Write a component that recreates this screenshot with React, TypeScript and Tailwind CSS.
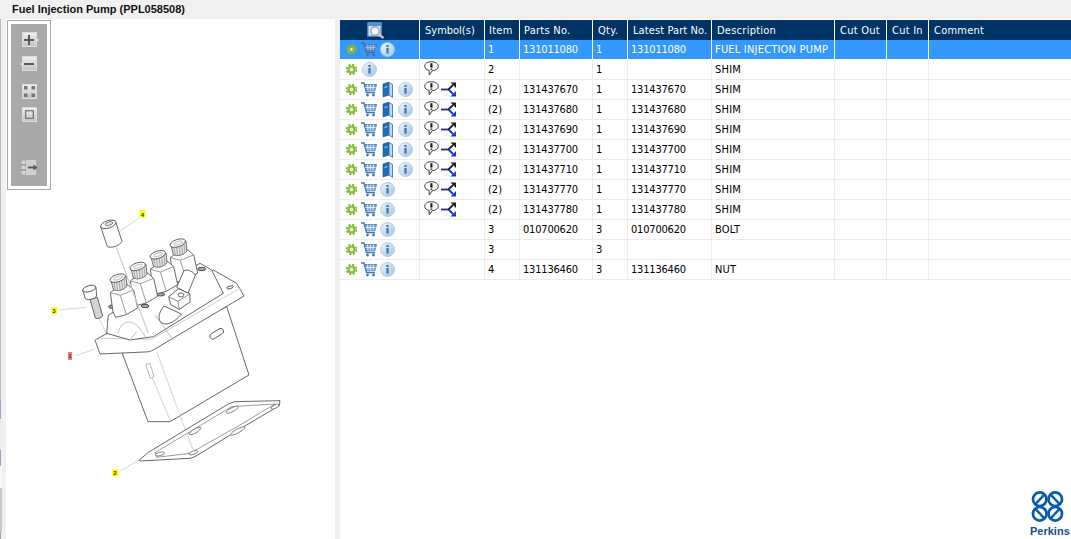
import React from 'react';

const cols = 'grid grid-cols-[80px_65px_35px_73px_35px_84px_123px_52px_42px_1fr]';

const rows = [
  { icons: 'cart-info', selected: true, sym: 0, item: '1', part: '131011080', qty: '1', latest: '131011080', desc: 'FUEL INJECTION PUMP' },
  { icons: 'info', sym: 1, item: '2', part: '', qty: '1', latest: '', desc: 'SHIM' },
  { icons: 'all', sym: 2, item: '(2)', part: '131437670', qty: '1', latest: '131437670', desc: 'SHIM' },
  { icons: 'all', sym: 2, item: '(2)', part: '131437680', qty: '1', latest: '131437680', desc: 'SHIM' },
  { icons: 'all', sym: 2, item: '(2)', part: '131437690', qty: '1', latest: '131437690', desc: 'SHIM' },
  { icons: 'all', sym: 2, item: '(2)', part: '131437700', qty: '1', latest: '131437700', desc: 'SHIM' },
  { icons: 'all', sym: 2, item: '(2)', part: '131437710', qty: '1', latest: '131437710', desc: 'SHIM' },
  { icons: 'cart-info', sym: 2, item: '(2)', part: '131437770', qty: '1', latest: '131437770', desc: 'SHIM' },
  { icons: 'cart-info', sym: 2, item: '(2)', part: '131437780', qty: '1', latest: '131437780', desc: 'SHIM' },
  { icons: 'cart-info', sym: 0, item: '3', part: '010700620', qty: '3', latest: '010700620', desc: 'BOLT' },
  { icons: 'cart-info', sym: 0, item: '3', part: '', qty: '3', latest: '', desc: '' },
  { icons: 'cart-info', sym: 0, item: '4', part: '131136460', qty: '3', latest: '131136460', desc: 'NUT' },
];

const Gear = () => (
  <svg width="11" height="11" viewBox="0 0 11 11" className="shrink-0">
    <circle cx="5.5" cy="5.5" r="4.9" fill="none" stroke="#7fb02c" strokeWidth="1.6" strokeDasharray="2.2 1.65" />
    <circle cx="5.5" cy="5.5" r="3" fill="none" stroke="#86b833" strokeWidth="2.2" />
    <circle cx="5.5" cy="5.5" r="1.4" fill="#e4efc8" />
  </svg>
);

const Cart = ({ dim }: { dim?: boolean }) => {
  const line = dim ? '#4f6c98' : '#3f78b4';
  return (
    <svg width="16" height="15" viewBox="0 0 16 15" className="shrink-0">
      <path d="M0 1H3L5.5 10.5H14" fill="none" stroke={line} strokeWidth="1.4" />
      <path d="M3.6 2.5H15.6L13.8 8.6H5.2Z" fill={dim ? '#6f93c4' : '#79a8d8'} stroke={line} strokeWidth=".8" />
      <path d="M6.5 2.5L7 8.6M9.5 2.5V8.6M12.5 2.5L12 8.6M4.3 5.5H14.7" stroke={dim ? '#a9c8ea' : '#ffffff'} strokeWidth=".7" />
      <circle cx="6.5" cy="13" r="1.4" fill={line} />
      <circle cx="12.5" cy="13" r="1.4" fill={line} />
    </svg>
  );
};

const Book = () => (
  <svg width="11" height="16" viewBox="0 0 11 16" className="shrink-0">
    <path d="M1 2L7 0V13L1 15Z" fill="#1f6db5" stroke="#174f8a" strokeWidth=".6" />
    <path d="M7 0.5L10.5 2.5V15.5L7 13Z" fill="#bcd7ef" stroke="#2a6ca8" strokeWidth=".8" />
    <path d="M2.5 5.5L5.5 4.5" stroke="#a8cdf0" strokeWidth="1.2" />
  </svg>
);

const Info = () => (
  <svg width="15" height="15" viewBox="0 0 15 15" className="shrink-0">
    <defs>
      <linearGradient id="infoFill" x1="0" y1="0" x2="1" y2="1">
        <stop offset="0" stopColor="#eef5fb" />
        <stop offset="1" stopColor="#a3c6e3" />
      </linearGradient>
    </defs>
    <circle cx="7.5" cy="7.5" r="7" fill="url(#infoFill)" stroke="#a5c5df" strokeWidth=".8" />
    <rect x="6.4" y="3" width="2.2" height="2" fill="#3e74ab" />
    <rect x="6.4" y="6" width="2.2" height="5.6" fill="#3e74ab" />
  </svg>
);

const Bubble = () => (
  <svg width="15" height="15" viewBox="0 0 15 15" className="shrink-0">
    <path d="M7.5 .7C11.3 .7 14.3 2.5 14.3 5.3C14.3 7.9 11.5 9.4 8.4 9.6L5.2 14V9.4C2.6 8.9 .7 7.4 .7 5.3C.7 2.5 3.7 .7 7.5 .7Z" fill="#ffffff" stroke="#3c3c3c" strokeWidth="1" />
    <rect x="6.3" y="2.2" width="2.2" height="4.4" fill="#222222" />
    <rect x="6.5" y="7.4" width="1.8" height="1.7" fill="#444444" />
  </svg>
);

const Branch = () => (
  <svg width="16" height="15" viewBox="0 0 16 15" className="shrink-0">
    <path d="M0 7.5H8" stroke="#20307a" strokeWidth="1.8" />
    <path d="M7.5 7.5L12 3" stroke="#222222" strokeWidth="1.8" />
    <path d="M7.5 7.5L12 12" stroke="#1038c8" strokeWidth="1.8" />
    <path d="M9.5 0.5H15V6Z" fill="#222222" />
    <path d="M15 9V14.5H9.5Z" fill="#1038d8" />
  </svg>
);

const RowIcons = ({ kind, selected }: { kind: string; selected?: boolean }) => {
  if (kind === 'info') {
    return (
      <div className="flex items-center pl-[6px] gap-[5px]">
        <Gear />
        <Info />
      </div>
    );
  }
  return (
    <div className="flex items-center pl-[6px]">
      <Gear />
      <div className="ml-[4px]"><Cart dim={selected} /></div>
      {kind === 'all' && <div className="ml-[5px]"><Book /></div>}
      <div className={kind === 'all' ? 'ml-[5px]' : 'ml-[3px]'}><Info /></div>
    </div>
  );
};

const Tool = ({ children, className }: { children: React.ReactNode; className: string }) => (
  <div className={`relative w-[15px] h-[15px] shrink-0 border border-[#dcdcdc] bg-linear-to-b from-[#efefef] to-[#c4c4c4] flex items-center justify-center ${className}`}>
    {children}
  </div>
);

const Injector = ({ x, y }: { x: number; y: number }) => (
  <g transform={`translate(${x} ${y})`}>
    {/* hex body */}
    <path d="M-24 38L-8 26L28 14L46 30L58 84L24 104L-8 112L-16 96Z" fill="#fff" />
    <path d="M-24 38L6 46L46 30M6 46L24 104" fill="none" stroke="#888" strokeWidth="2.5" />
    {/* knurled stem */}
    <path d="M-23 -2L-15 28C-5 36 18 30 26 18L23 -12Z" fill="#e2e2e2" stroke="#555" strokeWidth="2.5" />
    <path d="M-14 4L-9 30M-6 3L-2 33M2 1L6 32M10 -2L13 28M17 -5L20 24" stroke="#9c9c9c" strokeWidth="2.5" />
    {/* top */}
    <ellipse cx="0" cy="-6" rx="24" ry="11" transform="rotate(-18)" fill="#fff" strokeWidth="2.5" />
    <ellipse cx="1" cy="-6" rx="14" ry="5" transform="rotate(-18)" fill="#f4f4f4" stroke="#aaa" strokeWidth="2" />
  </g>
);

const PumpDrawing = () => (
  <svg viewBox="6 190 329 349" width="329" height="349" className="block shrink-0">
    <g transform="translate(40 200) scale(.33333)" stroke="#4f4f4f" strokeWidth="2.6" fill="#ffffff" strokeLinejoin="round">
      {/* leaders */}
      <g stroke="#cdcdcd" fill="none" strokeWidth="2.5">
        <path d="M300 52L238 95" />
        <path d="M55 330L140 322" />
        <path d="M178 355L200 405" />
        <path d="M108 467L165 447" />
        <path d="M240 813L298 780" />
      </g>
      {/* body under the flange */}
      <path d="M245 455L324 665L390 665L414 651L627 525L560 320L300 440Z" />
      <path d="M319 490L392 665M350 455L440 700" fill="none" stroke="#cacaca" strokeWidth="2.5" />
      <path d="M318 495L330 490L342 530L331 535Z" fill="#fff" stroke="#aaaaaa" strokeWidth="2.5" />
      {/* flange */}
      <path d="M165 420L205 398L520 210L590 250L612 288L340 450C332 454 325 456 315 456L180 462Z" />
      <path d="M165 420L190 415L335 418L600 265" fill="none" stroke="#c4c4c4" strokeWidth="2.5" />
      <rect x="508" y="393" width="45" height="17" rx="8" transform="rotate(-32 530 402)" />
      <ellipse cx="570" cy="262" rx="10" ry="4" transform="rotate(-15 570 262)" />
      {/* rear block and saddles */}
      <path d="M200 400L205 345L250 320L480 190L515 210L550 280L340 410L270 420Z" />
      <path d="M235 400C240 365 270 355 295 380L320 415M290 395L270 420M345 345L400 420" fill="none" stroke="#b0b0b0" strokeWidth="2.5" />
      <ellipse cx="215" cy="320" rx="9" ry="5" fill="#aaa" stroke="#333" />
      <ellipse cx="315" cy="318" rx="12" ry="5" fill="#aaa" stroke="#333" />
      <ellipse cx="362" cy="283" rx="12" ry="5" fill="#aaa" stroke="#333" />
      <ellipse cx="485" cy="207" rx="12" ry="5" fill="#aaa" stroke="#333" />
      {/* injectors, rear to front */}
      <Injector x={415} y={135} />
      <Injector x={355} y={170} />
      <Injector x={295} y={205} />
      <Injector x={235} y={240} />
      <path d="M228 140L325 400" stroke="#cdcdcd" strokeWidth="2.5" fill="none" />
      {/* delivery pipe and banjo */}
      <path d="M372 318C358 335 352 355 362 366C375 378 400 372 424 342Z" />
      <path d="M410 262L432 212C442 206 462 216 466 226L444 280Z" />
      <path d="M386 290L416 266L450 282L450 306L418 328L392 314Z" />
      <path d="M386 290L414 304L450 282M414 304L418 328" fill="none" stroke="#777" strokeWidth="2.5" />
      <ellipse cx="423" cy="285" rx="9" ry="6" />
      {/* sleeve, part 4 */}
      <path d="M182 80L202 140C215 146 240 136 246 124L228 68Z" />
      <ellipse cx="205" cy="73" rx="24" ry="11" transform="rotate(-18 205 73)" />
      <ellipse cx="207" cy="71" rx="12" ry="5" transform="rotate(-18 207 71)" fill="#e6e6e6" stroke="#777" />
      {/* bolt, part 3 */}
      <path d="M150 298L166 354C172 358 184 354 188 348L172 292Z" fill="#d4d4d4" />
      <path d="M128 270L136 296C146 302 165 296 170 288L168 262Z" />
      <ellipse cx="148" cy="266" rx="20" ry="9" transform="rotate(-15 148 266)" />
      {/* labels */}
      <rect x="298" y="30" width="18" height="22" fill="#ffff00" stroke="none" />
      <rect x="34" y="321" width="18" height="21" fill="#ffff00" stroke="none" />
      <rect x="84" y="456" width="12" height="24" fill="#f58080" stroke="none" />
      <rect x="216" y="808" width="19" height="20" fill="#ffff00" stroke="none" />
      {/* gasket */}
      <path d="M297 781L325 757L565 612L585 605L720 602L718 617L620 675L465 770L450 775L300 783Z" fill="#fff" />
      <path d="M345 758L575 620L705 612L600 675L450 760L350 772Z" fill="none" stroke="#777" strokeWidth="2.2" />
      <g fill="#fff" stroke="#666" strokeWidth="2.2">
        <ellipse cx="360" cy="762" rx="14" ry="5" transform="rotate(-12 360 762)" />
        <ellipse cx="465" cy="693" rx="20" ry="6" transform="rotate(-30 465 693)" />
        <ellipse cx="460" cy="758" rx="14" ry="5" transform="rotate(-20 460 758)" />
        <ellipse cx="577" cy="629" rx="20" ry="6" transform="rotate(-28 577 629)" />
        <ellipse cx="593" cy="693" rx="24" ry="6" transform="rotate(-28 593 693)" />
        <ellipse cx="705" cy="620" rx="13" ry="5" transform="rotate(-25 705 620)" />
      </g>
      <path d="M228 140L325 400M440 700L462 757" fill="none" stroke="#cacaca" strokeWidth="2.5" />
    </g>
    <g className="font-['Liberation_Sans',sans-serif]" fontSize="6" fontWeight="700" fill="#333333" textAnchor="middle">
      <text x="142.5" y="216.5">4</text>
      <text x="54" y="313">3</text>
      <text x="70" y="358">1</text>
      <text x="115" y="475">2</text>
    </g>
  </svg>
);

const PerkinsLogo = () => (
  <div className="absolute right-[2px] bottom-[1px] flex flex-col w-[39px]">
    <svg width="33" height="31" viewBox="0 0 34 32" className="block ml-px">
      <g fill="none" stroke="#0a5ca8" strokeWidth="2.8">
        <circle cx="9" cy="8.5" r="7" />
        <circle cx="25" cy="8.5" r="7" />
        <circle cx="9" cy="23.5" r="7" />
        <circle cx="25" cy="23.5" r="7" />
        <path d="M4.5 13.5L14 3.5M20 3.5L29.5 13.5M4.5 18.5L14 28.5M29.5 18.5L20 28.5" strokeWidth="2.4" />
      </g>
    </svg>
    <span className="mt-[3px] text-[11px] leading-[13px] font-bold text-[#10508f] whitespace-nowrap font-['Liberation_Sans',sans-serif]">Perkins</span>
  </div>
);

export default function App() {
  return (
    <div className="relative w-[1071px] h-[539px] overflow-hidden bg-[#f0f0f0] text-[11px] leading-none text-black font-['DejaVu_Sans_Condensed','Liberation_Sans',sans-serif]">
      <div className="h-[19px] pl-[12px] flex items-center text-[11px] font-bold text-[#111] font-['Liberation_Sans',sans-serif]">
        Fuel Injection Pump (PPL058508)
      </div>
      <div className="flex h-[520px]">
        {/* gutter with the clipped window behind */}
        <div className="w-[6px] shrink-0 flex flex-col">
          <div className="w-[1px] h-[381px] bg-[#b9b9c9]" />
          <div className="w-[1px] h-[19px] bg-[#a0a0c0]" />
          <div className="w-[1px] h-[31px] bg-[#e8e8f2]" />
          <div className="w-[1px] h-[16px] bg-[#a0a0c0]" />
          <div className="w-[2px] h-[22px] bg-[#f8f8f8]" />
          <div className="w-[2px] h-[44px] bg-[#c8c8c8]" />
          <div className="w-[1px] h-[7px] bg-[#a0a0c0]" />
        </div>
        {/* drawing panel */}
        <div className="w-[329px] shrink-0 bg-white overflow-hidden">
          <div className="mt-px ml-px w-[44px] h-[170px] border border-[#a8a8a8] p-[3px] bg-white">
            <div className="h-full bg-[#a9a9a9] flex flex-col items-center pt-[8px]">
              <Tool className="">
                <svg width="12" height="12" viewBox="0 0 12 12"><path d="M6 1V11M1 6H11" stroke="#5a5a5a" strokeWidth="2" /></svg>
                <span className="absolute -right-[3px] top-[4px] w-0 h-0 border-y-[3px] border-y-transparent border-l-[3px] border-l-[#dcdcdc]" />
              </Tool>
              <Tool className="mt-[9px]">
                <svg width="12" height="12" viewBox="0 0 12 12"><path d="M1 6H11" stroke="#5a5a5a" strokeWidth="2" /></svg>
                <span className="absolute -left-[3px] top-[4px] w-0 h-0 border-y-[3px] border-y-transparent border-r-[3px] border-r-[#dcdcdc]" />
              </Tool>
              <Tool className="mt-[13px]">
                <svg width="13" height="13" viewBox="0 0 13 13"><path d="M1 1H4.5V4.5H1ZM8.5 1H12V4.5H8.5ZM1 8.5H4.5V12H1ZM8.5 8.5H12V12H8.5Z" fill="#777" /></svg>
              </Tool>
              <Tool className="mt-[8px]">
                <svg width="11" height="11" viewBox="0 0 11 11"><rect x="1.7" y="1.7" width="7.6" height="7.6" fill="none" stroke="#707070" strokeWidth="1.2" /></svg>
              </Tool>
              <div className="mt-[38px] w-[17px] h-[15px] flex items-center">
                <svg width="17" height="15" viewBox="0 0 17 15">
                  <path d="M0 0H5V5H0ZM0 5H5V10H0ZM0 10H5V15H0Z" fill="#d6d6d6" stroke="#888" strokeWidth=".7" />
                  <rect x="5" y="0" width="10" height="15" fill="#d0d0d0" />
                  <path d="M7 7.5H14" stroke="#555" strokeWidth="1.8" />
                  <path d="M12.5 4.5L16.5 7.5L12.5 10.5Z" fill="#555" />
                </svg>
              </div>
            </div>
          </div>
          <PumpDrawing />
        </div>
        <div className="w-[5px] shrink-0" />
        {/* parts table */}
        <div className="w-[731px] shrink-0 bg-white pt-px relative">
          <div className={`${cols} h-[20px] bg-[#003366] text-white text-[11px] tracking-[0.25px]`}>
            <div className="border-r border-white flex items-center justify-center">
              <svg width="18" height="17" viewBox="0 0 18 17" className="mr-[8px]">
                <path d="M1 1H14V14H1Z" fill="#dbe8f4" stroke="#6ea6d8" strokeWidth="1.4" />
                <path d="M1 1H14V4H1Z" fill="#4f94d4" />
                <circle cx="8" cy="9" r="4.2" fill="#eef4fa" stroke="#9aa4ae" strokeWidth="1.4" />
                <path d="M11 12L16.5 16" stroke="#c8c8c8" strokeWidth="2.2" />
              </svg>
            </div>
            <div className="border-r border-white flex items-center pl-[5px] tracking-normal">Symbol(s)</div>
            <div className="border-r border-white flex items-center pl-[4px]">Item</div>
            <div className="border-r border-white flex items-center pl-[4px]">Parts No.</div>
            <div className="border-r border-white flex items-center pl-[5px]">Qty.</div>
            <div className="border-r border-white flex items-center pl-[5px] tracking-[0.1px]">Latest Part No.</div>
            <div className="border-r border-white flex items-center pl-[5px]">Description</div>
            <div className="border-r border-white flex items-center pl-[5px]">Cut Out</div>
            <div className="border-r border-white flex items-center pl-[5px]">Cut In</div>
            <div className="flex items-center pl-[5px]">Comment</div>
          </div>
          {rows.map((r) => {
            const sep = r.selected ? 'border-r border-white' : 'border-r border-[#ececec]';
            return (
              <div
                key={r.part + r.item + r.desc + r.qty}
                className={`${cols} h-[20px] border-b ${r.selected ? 'bg-[#3399ff] text-white border-white' : 'border-[#ececec]'}`}
              >
                <div className={`${sep} flex items-center`}>
                  <RowIcons kind={r.icons} selected={r.selected} />
                </div>
                <div className={`${sep} flex items-start gap-[2px] pl-[4px] pt-px`}>
                  {r.sym > 0 && <Bubble />}
                  {r.sym > 1 && <div className="mt-px"><Branch /></div>}
                </div>
                <div className={`${sep} flex items-center pl-[3px]`}>{r.item}</div>
                <div className={`${sep} flex items-center pl-[3px] tracking-[-0.2px]`}>{r.part}</div>
                <div className={`${sep} flex items-center pl-[3px]`}>{r.qty}</div>
                <div className={`${sep} flex items-center pl-[3px] tracking-[-0.2px]`}>{r.latest}</div>
                <div className={`${sep} flex items-center pl-[3px] whitespace-nowrap tracking-[0.2px]`}>{r.desc}</div>
                <div className={sep} />
                <div className={sep} />
                <div />
              </div>
            );
          })}
          <PerkinsLogo />
        </div>
      </div>
    </div>
  );
}
